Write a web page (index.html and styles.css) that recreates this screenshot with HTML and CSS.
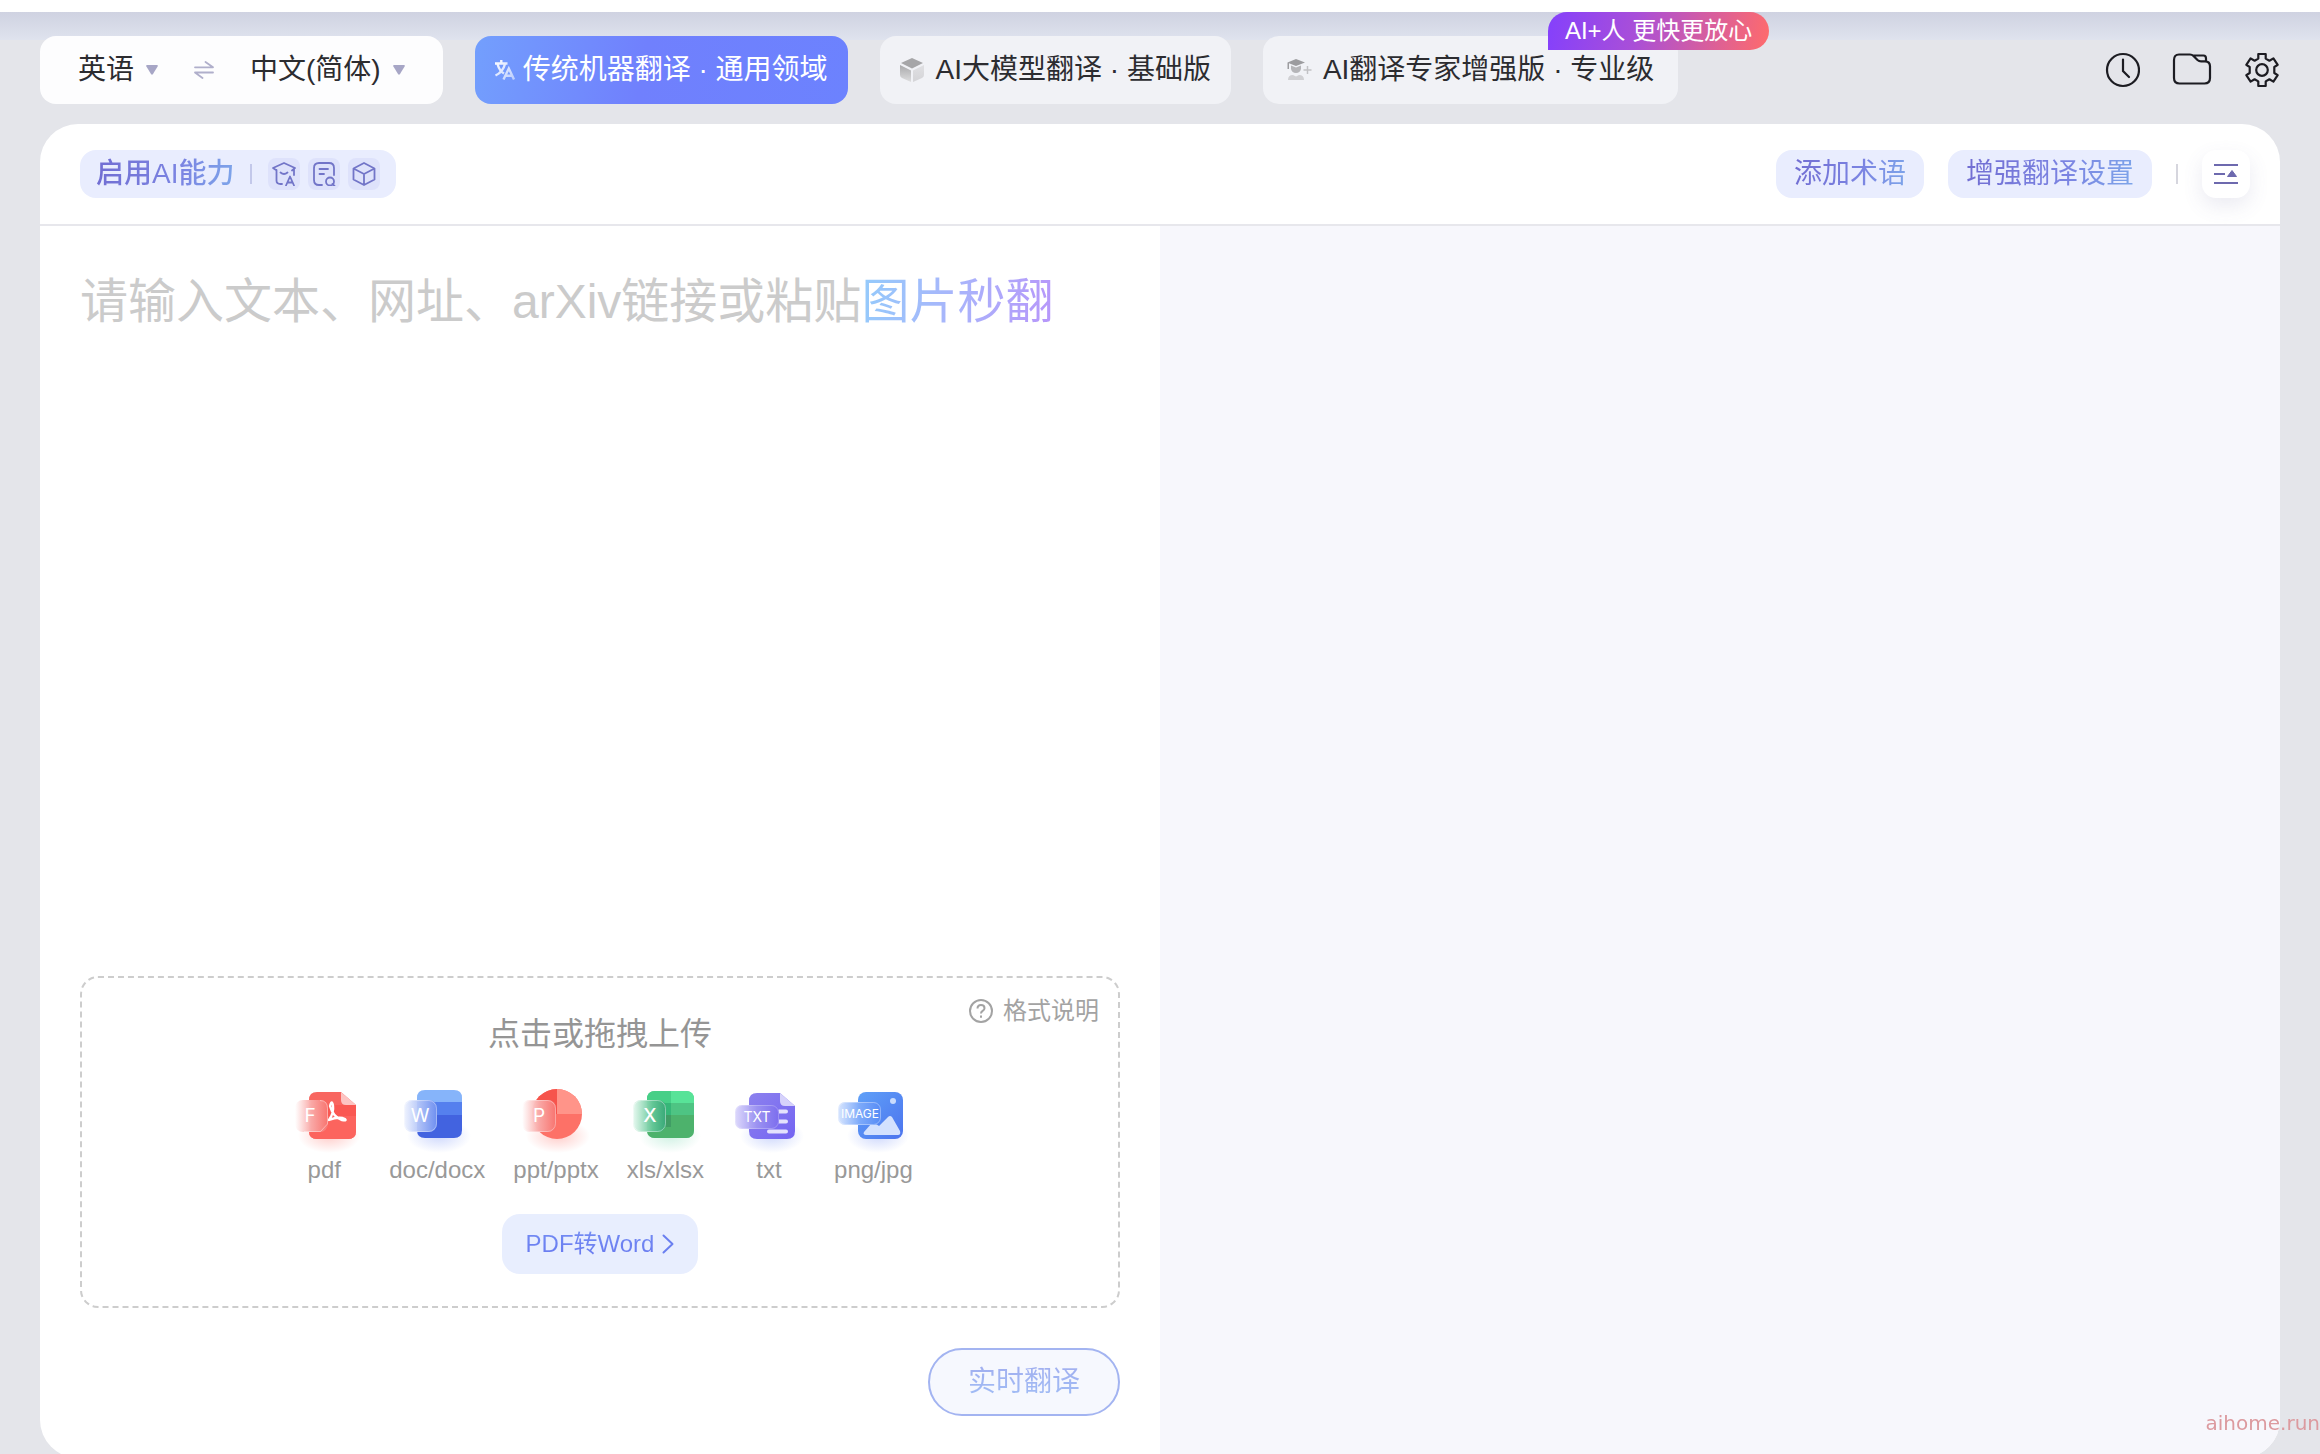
FILE: index.html
```html
<!DOCTYPE html>
<html lang="zh-CN">
<head>
<meta charset="utf-8">
<meta name="viewport" content="width=device-width, initial-scale=1">
<title>翻译</title>
<link rel="stylesheet" href="styles.css">
</head>
<body>
<div class="page">
  <header class="header">
    <div class="languages">
      <button class="lang" type="button">英语
        <svg class="caret" viewBox="0 0 12 10"><path d="M1.2 0h9.6q1.6 0 .8 1.400L7 9q-1 1.400-2 0L.4 1.400Q-.4 0 1.200 0z" fill="#a7a6c6"/></svg>
      </button>
      <button class="swap" type="button" aria-label="交换语言">
        <svg viewBox="0 0 20 18" fill="none" stroke="#b0afcb" stroke-width="1.800" stroke-linecap="round" stroke-linejoin="round"><path d="M1 6.300h18L11.500 1M19 11.500H1L8.500 17"/></svg>
      </button>
      <button class="lang" type="button">中文(简体)
        <svg class="caret" viewBox="0 0 12 10"><path d="M1.2 0h9.6q1.6 0 .8 1.400L7 9q-1 1.400-2 0L.4 1.400Q-.4 0 1.200 0z" fill="#a7a6c6"/></svg>
      </button>
    </div>

    <nav class="modes">
      <button class="mode mode-active" type="button">
        <svg class="icon-sm" viewBox="0 0 20 20" fill="none" stroke="url(#fade)" stroke-width="2.400">
          <defs><linearGradient id="fade" gradientUnits="userSpaceOnUse" x1="0" y1="0" x2="20" y2="20"><stop stop-color="#fff"/><stop offset="1" stop-color="#fff" stop-opacity=".5"/></linearGradient></defs>
          <path d="M0 3.500h12.500M6.300 0v3.500M2.500 4q2 7 6.500 9.500M10 4Q8 12 .5 15.500M8.500 19.500L13.800 8.500 19 19.500M10.500 15.700h6.500"/>
        </svg>
        <span>传统机器翻译 · 通用领域</span>
      </button>
      <button class="mode" type="button">
        <svg class="icon-md" viewBox="0 0 24 24">
          <defs>
            <linearGradient id="cubeL" x2="0" y2="1"><stop stop-color="#a9a9ab"/><stop offset="1" stop-color="#dededf"/></linearGradient>
            <linearGradient id="cubeR" x2="0" y2="1"><stop stop-color="#e0e0e3"/><stop offset="1" stop-color="#d4d4d7"/></linearGradient>
          </defs>
          <path d="M12 0L23 5 12 10.500 1 5z" fill="#a6a6a8"/>
          <path d="M0 7l11 5.500V24L2 20q-2-1-2-3z" fill="url(#cubeL)"/>
          <path d="M24 7l-11 5.500V24l9-4q2-1 2-3z" fill="url(#cubeR)"/>
        </svg>
        <span>AI大模型翻译 · 基础版</span>
      </button>
      <button class="mode mode-wide" type="button">
        <svg class="icon-md" viewBox="0 0 24 24">
          <path d="M9 1l9 3.500L9 8 2 5.200V11H.5V4.500z" fill="#9c9c9f"/>
          <path d="M4 7.500L9 9.500l5-2V11q-1 4-5 4t-5-4z" fill="#b5b5b8"/>
          <path d="M1 22q0-5 5-5l3 1.500L12 17q5 0 5 5z" fill="#d0d0d3"/>
          <path d="M20.500 8v8M16.500 12h8" stroke="#c2c2c5" stroke-width="1.500"/>
        </svg>
        <span>AI翻译专家增强版 · 专业级</span>
        <span class="badge">AI+人 更快更放心</span>
      </button>
    </nav>

    <div class="tools">
      <button class="tool" type="button" aria-label="历史记录">
        <svg viewBox="0 0 36 36" fill="none" stroke="#1c1c22" stroke-width="2.200"><circle cx="19" cy="18" r="16"/><path d="M19 7.500v11.500l6 6" stroke-linecap="round"/></svg>
      </button>
      <button class="tool tool-folder" type="button" aria-label="文件夹">
        <svg viewBox="0 0 40 36" fill="none" stroke="#1c1c22" stroke-width="2.200" stroke-linejoin="round"><path d="M7 2.500h11q2 0 3.500 1.500l4 4q1.500 1.300 3.500 1.300h4q5 0 5 5V26q0 5.500-5.500 5.500H7.500Q2 31.500 2 26V8q0-5.500 5-5.500zM20.500 3.500h11q2.500 0 2.500 3v3"/></svg>
      </button>
      <button class="tool" type="button" aria-label="设置">
        <svg viewBox="0 0 36 36" fill="none" stroke="#1c1c22" stroke-width="2.200" stroke-linejoin="round"><path d="M14.300 2h7.400v4.600l3.700 2.100 4-2.300 4.300 6.400-3.400 2.200v6l3.400 2.200-4.300 6.400-4-2.300-3.700 2.100V34h-7.400v-4.600l-3.700-2.100-4 2.300-4.300-6.400L5.700 21v-6l-3.400-2.200L6.600 6.400l4 2.300 3.700-2.100z"/><circle cx="18" cy="18" r="5.800"/></svg>
      </button>
    </div>
  </header>

  <main class="card">
    <div class="toolbar">
      <button class="ai-pill" type="button">
        <span class="gradient-text strong">启用AI能力</span>
        <span class="divider"></span>
        <span class="chips">
          <span class="chip"><svg viewBox="0 0 24 24" fill="none" stroke="#7275c8" stroke-width="1.800" stroke-linecap="round" stroke-linejoin="round"><path d="M4 8L1 6l11-5 11 5-3 2.500M4.500 8v10.500q0 3.500 4 3.500h1.500M8.500 10.500q3.500 3 7 0M22 7v6M14 23.500l4-9 4 9M15.500 20.500h5"/></svg></span>
          <span class="chip"><svg viewBox="0 0 24 24" fill="none" stroke="#7275c8" stroke-width="1.800" stroke-linecap="round"><path d="M10 23H7q-5 0-5-5V6q0-5 5-5h10q5 0 5 5v7M7.500 7h8.500M7.500 12h4.500"/><circle cx="18" cy="19.500" r="4"/><path d="M20.500 22l2 2"/></svg></span>
          <span class="chip"><svg viewBox="0 0 24 24" fill="none" stroke="#7275c8" stroke-width="1.800" stroke-linejoin="round"><path d="M12 1l10.500 5.500v11L12 23 1.500 17.500v-11zM1.500 6.500L12 12l10.500-5.500M12 12v11"/></svg></span>
        </span>
      </button>
      <div class="toolbar-right">
        <button class="pill" type="button"><span class="gradient-text">添加术语</span></button>
        <button class="pill" type="button"><span class="gradient-text">增强翻译设置</span></button>
        <span class="divider divider-gray"></span>
        <button class="collapse" type="button" aria-label="收起">
          <svg viewBox="0 0 24 22"><path d="M0 2h24M0 11h11M0 20h24" stroke="#6d69ae" stroke-width="2.200"/><path d="M18 7.500l4.500 6h-9z" fill="#6d69ae" stroke="#6d69ae" stroke-linejoin="round"/></svg>
        </button>
      </div>
    </div>

    <div class="panels">
      <section class="source">
        <div class="editor">
          <textarea id="source-text" class="input"></textarea>
          <label class="hint" for="source-text">请输入文本、网址、arXiv链接或粘贴<span class="hint-accent">图片秒翻</span></label>
        </div>

        <div class="upload">
          <a class="format-help" href="#">
            <svg viewBox="0 0 24 24" fill="none" stroke="#a3a3a3" stroke-width="2"><circle cx="12" cy="12" r="11"/><path d="M8.500 9.500q0-3.500 3.500-3.500t3.500 3.200q0 1.800-2 2.800-1.500.8-1.500 2.500M12 16.500v2.200"/></svg>
            <span>格式说明</span>
          </a>
          <h2 class="upload-title">点击或拖拽上传</h2>
          <ul class="formats">
            <li class="format">
              <svg viewBox="1 0 74 72">
                <defs>
                  <linearGradient id="tagRed" x2="1"><stop stop-color="#fff" stop-opacity=".9"/><stop offset=".5" stop-color="#f9a8a6"/><stop offset="1" stop-color="#f8746f"/></linearGradient>
                  <radialGradient id="glowRed"><stop stop-color="#ff5a50" stop-opacity=".3"/><stop offset="1" stop-color="#ff5a50" stop-opacity="0"/></radialGradient>
                </defs>
                <ellipse cx="43" cy="54" rx="31" ry="17" fill="url(#glowRed)"/>
                <path d="M31 10h24l15 13v26q0 8-8 8H31q-8 0-8-8V18q0-8 8-8z" fill="#f86660"/>
                <path d="M23 23h47v11H23z" fill="#fa5852"/>
                <path d="M23 34h47v15q0 8-8 8H31q-8 0-8-8z" fill="#fc645e"/>
                <path d="M55 10l15 13H60q-5 0-5-5z" fill="#fdc4c2"/>
                <path d="M43 38q5-7 4-14t-3 0q3 11 12 14 5 1 3-1-6-3-16 1z" fill="none" stroke="#fff" stroke-width="2.400" stroke-linejoin="round"/>
                <rect x="9" y="18" width="33" height="32" rx="8" fill="url(#tagRed)"/>
                <path d="M34 18.500q7.500 0 7.500 8V42l-7 7.500H18" fill="none" stroke="#fff" stroke-opacity=".4"/>
                <text class="glyph" x="24" y="40">F</text>
              </svg>
              <span>pdf</span>
            </li>
            <li class="format">
              <svg viewBox="1 0 74 72">
                <defs>
                  <linearGradient id="tagBlue" x2="1"><stop stop-color="#eef2fe" stop-opacity=".9"/><stop offset="1" stop-color="#6e8ff0"/></linearGradient>
                  <radialGradient id="glowBlue"><stop stop-color="#5577f5" stop-opacity=".28"/><stop offset="1" stop-color="#5577f5" stop-opacity="0"/></radialGradient>
                </defs>
                <ellipse cx="40" cy="54" rx="32" ry="17" fill="url(#glowBlue)"/>
                <path d="M18 20v-4q0-8 8-8h29q8 0 8 8v4z" fill="#86b4fa"/>
                <path d="M18 20h45v13H18z" fill="#5580ee"/>
                <path d="M18 33h45v15q0 8-8 8H26q-8 0-8-8z" fill="#4263e0"/>
                <rect x="5" y="18" width="33" height="32" rx="8" fill="url(#tagBlue)"/>
                <rect x="5.500" y="18.500" width="32" height="31" rx="8" fill="none" stroke="#fff" stroke-opacity=".35"/>
                <text class="glyph" x="21" y="40">W</text>
              </svg>
              <span>doc/docx</span>
            </li>
            <li class="format">
              <svg viewBox="1 0 74 72">
                <ellipse cx="40" cy="54" rx="32" ry="17" fill="url(#glowRed)"/>
                <circle cx="39" cy="32" r="25" fill="#fd7167"/>
                <path d="M39 7a25 25 0 0 0-25 25h25z" fill="#f6544c"/>
                <path d="M39 7a25 25 0 0 1 25 25H39z" fill="#ff9489"/>
                <rect x="4" y="18" width="34" height="32" rx="8" fill="url(#tagRed)"/>
                <rect x="4.500" y="18.500" width="33" height="31" rx="8" fill="none" stroke="#fff" stroke-opacity=".35"/>
                <text class="glyph" x="21" y="40">P</text>
              </svg>
              <span>ppt/pptx</span>
            </li>
            <li class="format">
              <svg viewBox="1 0 74 72">
                <defs>
                  <linearGradient id="tagGreen" x2="1"><stop stop-color="#e4f8ee" stop-opacity=".9"/><stop offset=".6" stop-color="#62c695"/><stop offset="1" stop-color="#38a877"/></linearGradient>
                  <radialGradient id="glowGreen"><stop stop-color="#46c892" stop-opacity=".25"/><stop offset="1" stop-color="#46c892" stop-opacity="0"/></radialGradient>
                </defs>
                <ellipse cx="43" cy="54" rx="31" ry="17" fill="url(#glowGreen)"/>
                <rect x="20" y="9" width="47" height="47" rx="8" fill="#4ec483"/>
                <path d="M20 21v-4q0-8 8-8h16v12z" fill="#47cf87"/>
                <path d="M44 9h15q8 0 8 8v4H44z" fill="#58e398"/>
                <path d="M20 21h24v12H20z" fill="#36b678"/>
                <path d="M20 33h47v15q0 8-8 8H28q-8 0-8-8z" fill="#4db26c"/>
                <path d="M20 33h24v12H20z" fill="#409d65"/>
                <rect x="6" y="18" width="33" height="32" rx="8" fill="url(#tagGreen)"/>
                <rect x="6.500" y="18.500" width="32" height="31" rx="8" fill="none" stroke="#fff" stroke-opacity=".4"/>
                <text class="glyph glyph-bold" x="23" y="40">X</text>
              </svg>
              <span>xls/xlsx</span>
            </li>
            <li class="format">
              <svg viewBox="1 0 74 72">
                <defs>
                  <linearGradient id="tagViolet" x2="1"><stop stop-color="#d9d4fb" stop-opacity=".9"/><stop offset=".5" stop-color="#9b92f1"/><stop offset="1" stop-color="#7c6dee"/></linearGradient>
                  <linearGradient id="bodyViolet" x2="1" y2="1"><stop stop-color="#8c81ee"/><stop offset="1" stop-color="#7464f2"/></linearGradient>
                </defs>
                <ellipse cx="41" cy="54" rx="32" ry="17" fill="url(#glowBlue)"/>
                <path d="M26 11h23l15 13v25q0 8-8 8H26q-8 0-8-8V19q0-8 8-8z" fill="url(#bodyViolet)"/>
                <path d="M49 11l15 13H54q-5 0-5-5z" fill="#d6d2fb"/>
                <path d="M48 29.500h7M46 39.500h9M38 49.500h17" stroke="#e4e1fd" stroke-width="4" stroke-linecap="round"/>
                <rect x="4" y="23" width="44" height="24" rx="7" fill="url(#tagViolet)"/>
                <rect x="4.500" y="23.500" width="43" height="23" rx="7" fill="none" stroke="#fff" stroke-opacity=".25"/>
                <text class="glyph glyph-sm" x="26" y="40">TXT</text>
              </svg>
              <span>txt</span>
            </li>
            <li class="format">
              <svg viewBox="1 0 74 72">
                <defs>
                  <linearGradient id="tagSky" x2="1"><stop stop-color="#d3e2fe" stop-opacity=".9"/><stop offset=".5" stop-color="#7daafa"/><stop offset="1" stop-color="#568bf5"/></linearGradient>
                  <linearGradient id="bodySky" x2="1" y2="1"><stop stop-color="#5fa0f8"/><stop offset="1" stop-color="#4c74ee"/></linearGradient>
                </defs>
                <ellipse cx="43" cy="54" rx="31" ry="17" fill="url(#glowBlue)"/>
                <rect x="23" y="10" width="45" height="47" rx="8" fill="url(#bodySky)"/>
                <circle cx="58" cy="19" r="3" fill="#c9dcfd"/>
                <path d="M29 52q-1 0 0-2l7-8q3-4 5 0l3 2 9-9q2-2 4 0l8 14q1 4-2 4H31q-2 0-2-1z" fill="#d3e1fe"/>
                <rect x="3" y="20" width="43" height="23" rx="7" fill="url(#tagSky)"/>
                <rect x="3.500" y="20.500" width="42" height="22" rx="7" fill="none" stroke="#fff" stroke-opacity=".35"/>
                <text class="glyph glyph-xs" x="25" y="36">IMAGE</text>
              </svg>
              <span>png/jpg</span>
            </li>
          </ul>
          <button class="convert" type="button">
            <span class="convert-text">PDF转Word</span>
            <svg viewBox="0 0 12 20" fill="none" stroke="#6a7ff0" stroke-width="2" stroke-linecap="round" stroke-linejoin="round"><path d="M1.500 1.500L10.500 10l-9 8.500"/></svg>
          </button>
        </div>

        <button class="translate" type="button"><span class="translate-text">实时翻译</span></button>
      </section>
      <section class="target"></section>
    </div>
  </main>
</div>
<div class="watermark">aihome.run</div>
</body>
</html>
```
FILE: styles.css
```css
* {
  box-sizing: border-box;
}

body {
  margin: 0;
  height: 100vh;
  overflow: hidden;
  background: #e4e5ea;
  color: #2c2c30;
  font: 28px/40px "Liberation Sans", "Noto Sans CJK SC", sans-serif;
}

button {
  margin: 0;
  padding: 0;
  border: 0;
  background: none;
  color: inherit;
  font: inherit;
  white-space: nowrap;
  cursor: pointer;
}

svg {
  display: block;
  flex: none;
}

.page {
  display: flex;
  flex-direction: column;
  min-height: calc(100vh + 4px);
  border-top: 12px solid #fff;
}

/* Header */
.header {
  display: flex;
  align-items: center;
  gap: 32px;
  padding: 24px 40px 20px;
  background: linear-gradient(#cfd2e1, #dfe3ee) no-repeat 0 0 / 100% 28px;
}

.languages {
  display: flex;
  align-items: center;
  gap: 36px;
  height: 68px;
  padding: 0 38px;
  border-radius: 16px;
  background: #fdfdfe;
}

.lang {
  display: flex;
  align-items: center;
  gap: 12px;
}

.caret {
  width: 12px;
  height: 10px;
}

.swap svg {
  width: 20px;
  height: 18px;
}

.modes {
  display: flex;
  gap: 32px;
}

.mode {
  position: relative;
  display: flex;
  align-items: center;
  gap: 12px;
  height: 68px;
  padding: 0 20px;
  border-radius: 16px;
  background: #f1f2f6;
}

.mode-wide {
  padding: 0 24px;
}

.mode-active {
  gap: 8px;
  background: linear-gradient(100deg, #739ffd, #7080fd 45%, #6c82fe);
  color: #fff;
}

.icon-sm {
  width: 20px;
  height: 20px;
}

.icon-md {
  width: 24px;
  height: 24px;
  overflow: visible;
}

.badge {
  position: absolute;
  top: -24px;
  left: 285px;
  padding: 0 17px;
  border-radius: 20px 20px 20px 0;
  background: linear-gradient(100deg, #8440fc, #a94fd8 40%, #ff6b6b);
  color: #fff;
  font-size: 24px;
  line-height: 38px;
}

.tools {
  display: flex;
  gap: 32px;
  margin-left: auto;
}

.tool svg {
  width: 36px;
  height: 36px;
}

.tool-folder svg {
  width: 40px;
}

/* Card */
.card {
  display: flex;
  flex: 1;
  flex-direction: column;
  margin: 0 40px;
  border-radius: 38px;
  background: #fff;
  overflow: hidden;
}

.toolbar {
  display: flex;
  align-items: center;
  justify-content: space-between;
  padding: 26px 30px 26px 40px;
  border-bottom: 2px solid #e7e7ec;
}

.toolbar-right {
  display: flex;
  align-items: center;
  gap: 24px;
}

.ai-pill,
.pill {
  display: flex;
  align-items: center;
  height: 48px;
  border-radius: 16px;
  background: #e9edfe;
}

.ai-pill {
  gap: 16px;
  padding: 0 16px;
}

.pill {
  padding: 0 18px;
}

.gradient-text {
  background: linear-gradient(100deg, #716dd2, #7b84e2 60%, #7da6ea);
  background-clip: text;
  color: transparent;
}

.strong {
  font-weight: 500;
}

.divider {
  width: 2px;
  height: 20px;
  background: #c3c8ea;
}

.divider-gray {
  background: #d6d6de;
}

.chips {
  display: flex;
  gap: 8px;
}

.chip {
  padding: 4px;
  border-radius: 8px;
  background: #dee2fb;
}

.chip svg {
  width: 24px;
  height: 24px;
}

.collapse {
  display: grid;
  place-items: center;
  width: 48px;
  height: 48px;
  border-radius: 14px;
  background: #fff;
  box-shadow: 0 8px 20px rgba(90, 90, 150, 0.12);
}

.collapse svg {
  width: 24px;
  height: 22px;
}

/* Panels */
.panels {
  display: grid;
  flex: 1;
  grid-template-columns: 1fr 1fr;
}

.source {
  display: flex;
  flex-direction: column;
  padding: 40px 40px 42px;
}

.target {
  background: #f7f7fc;
}

.editor {
  position: relative;
  display: flex;
  flex: 1;
}

.input {
  flex: 1;
  padding: 0;
  border: 0;
  outline: 0;
  background: none;
  resize: none;
  font: inherit;
  font-size: 48px;
  line-height: 72px;
}

.hint {
  position: absolute;
  top: 0;
  left: 0;
  color: #cbcbcb;
  font-size: 48px;
  line-height: 72px;
  pointer-events: none;
}

.hint-accent {
  background: linear-gradient(100deg, #94cbfb, #a9b4fb 50%, #b796fa);
  background-clip: text;
  color: transparent;
}

/* Upload */
.upload {
  position: relative;
  display: flex;
  flex-direction: column;
  align-items: center;
  margin-bottom: 40px;
  padding: 32px 24px;
  border: 2px dashed #cdcdcd;
  border-radius: 18px;
}

.format-help {
  position: absolute;
  top: 13px;
  right: 19px;
  display: flex;
  align-items: center;
  gap: 10px;
  color: #a3a3a3;
  font-size: 24px;
  text-decoration: none;
}

.format-help svg {
  width: 24px;
  height: 24px;
}

.upload-title {
  margin: 0;
  color: #959595;
  font-size: 32px;
  font-weight: 400;
  line-height: 48px;
}

.formats {
  display: flex;
  gap: 28px;
  margin: 24px 0 28px;
  padding: 0;
  list-style: none;
}

.format {
  display: flex;
  flex-direction: column;
  align-items: center;
  color: #999;
  font-size: 24px;
  line-height: 32px;
}

.format svg {
  width: 74px;
  height: 72px;
}

.glyph {
  fill: #fff;
  font-family: Inter, sans-serif;
  font-size: 19px;
  text-anchor: middle;
}

.glyph-bold {
  font-weight: 500;
}

.glyph-sm {
  font-size: 14px;
}

.glyph-xs {
  font-size: 12px;
}

.convert {
  display: flex;
  align-items: center;
  gap: 8px;
  height: 60px;
  padding: 0 24px;
  border-radius: 18px;
  background: #e8eefe;
  font-size: 24px;
}

.convert svg {
  width: 12px;
  height: 20px;
}

.convert-text {
  background: linear-gradient(#7590f4, #6675ef);
  background-clip: text;
  color: transparent;
}

.translate {
  align-self: flex-end;
  height: 68px;
  padding: 0 38px;
  border: 2px solid #a3b4f1;
  border-radius: 34px;
  background: #f6f8fe;
}

.translate-text {
  background: linear-gradient(#a2b0f0, #a0bcf5);
  background-clip: text;
  color: transparent;
}

.watermark {
  position: fixed;
  right: 0;
  bottom: 17px;
  color: #dc9a9f;
  font: 20px/28px "DejaVu Sans", sans-serif;
}
```
